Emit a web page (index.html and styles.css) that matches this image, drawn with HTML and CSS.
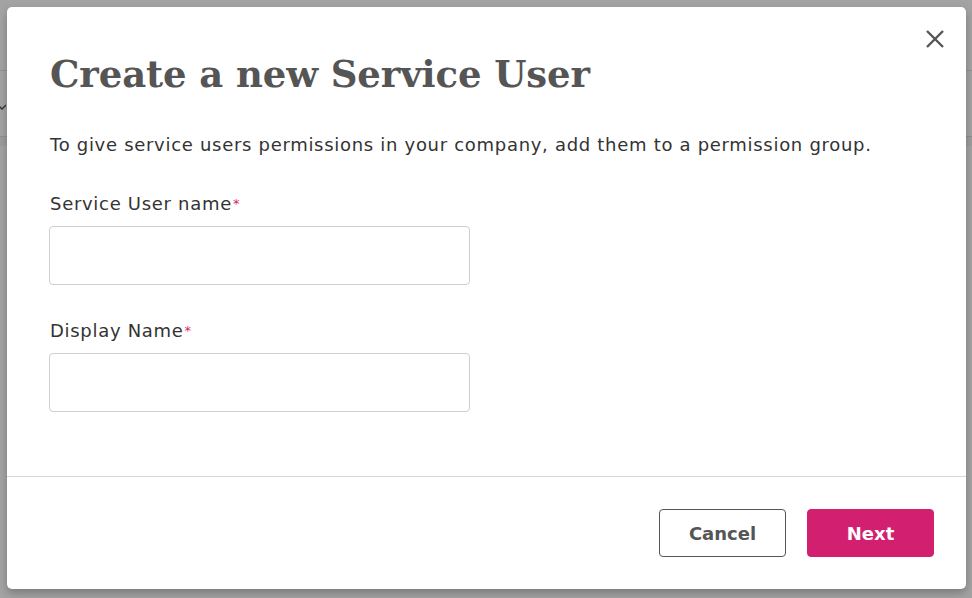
FILE: index.html
```html
<!DOCTYPE html>
<html>
<head>
<meta charset="utf-8">
<link rel="stylesheet" href="styles.css">
</head>
<body>
<div class="page">
  <div class="bg-line bg-line-1"></div>
  <svg class="bg-chev" width="8" height="6" viewBox="0 0 8 6"><path d="M0 1 L4 5 L8 1" stroke="#333" stroke-width="1.3" fill="none"/></svg>
  <div class="bg-band"></div>
</div>
<div class="overlay">
  <div class="modal">
    <button class="close" aria-label="Close">
      <svg width="20" height="20" viewBox="0 0 20 20"><path d="M2 2 L18 18 M18 2 L2 18" stroke="#555" stroke-width="2.4" stroke-linecap="butt" fill="none"/></svg>
    </button>
    <div class="body">
      <h1 class="title">Create a new Service User</h1>
      <p class="intro">To give service users permissions in your company, add them to a permission group.</p>
      <div class="field">
        <label class="label">Service User name<span class="req">*</span></label>
        <input class="input" type="text">
      </div>
      <div class="field">
        <label class="label">Display Name<span class="req">*</span></label>
        <input class="input" type="text">
      </div>
    </div>
    <div class="footer">
      <button class="btn btn-secondary">Cancel</button>
      <button class="btn btn-primary">Next</button>
    </div>
  </div>
</div>
</body>
</html>
```
FILE: styles.css
```css
html, body {
  margin: 0;
  padding: 0;
  width: 972px;
  height: 598px;
  overflow: hidden;
  background: #a3a3a3;
  font-family: "DejaVu Sans", "Liberation Sans", sans-serif;
}
.page {
  position: absolute;
  inset: 0;
  background: #a3a3a3;
}
.bg-line {
  position: absolute;
  left: 0;
  right: 0;
  height: 1px;
  background: #929292;
}
.bg-line-1 { top: 70px; }
.bg-band {
  position: absolute;
  left: 0;
  right: 0;
  top: 136px;
  height: 9px;
  background: #9c9c9c;
  border-top: 1px solid #8f8f8f;
}
.bg-chev {
  position: absolute;
  left: -2px;
  top: 104px;
}
.overlay {
  position: absolute;
  inset: 0;
}
.modal {
  position: absolute;
  left: 7px;
  top: 7px;
  width: 959px;
  height: 582px;
  background: #fff;
  border-radius: 5px;
  box-shadow: 0 4px 8px rgba(0,0,0,0.25);
  display: flex;
  flex-direction: column;
}
.close {
  position: absolute;
  top: 17px;
  right: 16px;
  width: 30px;
  height: 30px;
  padding: 0;
  border: none;
  background: transparent;
  display: flex;
  align-items: center;
  justify-content: center;
}
.body {
  flex: 1;
  padding: 0 43px;
  border-bottom: 1px solid #d6d6d6;
}
.title {
  margin: 46px 0 0;
  font-family: "DejaVu Serif", serif;
  font-weight: bold;
  font-size: 37px;
  line-height: 42px;
  color: #555;
  letter-spacing: -0.1px;
}
.intro {
  margin: 38px 0 0;
  font-size: 18px;
  line-height: 24px;
  letter-spacing: 0.7px;
  color: #333;
}
.field {
  margin-top: 35px;
  display: flex;
  flex-direction: column;
}
.field + .field { margin-top: 34px; }
.label {
  font-size: 18px;
  line-height: 24px;
  letter-spacing: 0.7px;
  color: #333;
  margin-bottom: 10px;
}
.req {
  color: #e0245e;
  font-size: 13px;
  vertical-align: top;
  margin-left: 1px;
}
.input {
  width: 421px;
  height: 59px;
  box-sizing: border-box;
  border: 1px solid #cfcfcf;
  border-radius: 4px;
  margin: 0 0 0 -1px;
}
.footer {
  padding: 32px 32px 32px;
  display: flex;
  justify-content: flex-end;
  gap: 21px;
}
.btn {
  width: 127px;
  height: 48px;
  box-sizing: border-box;
  border-radius: 4px;
  font-family: "DejaVu Sans", "Liberation Sans", sans-serif;
  font-size: 18px;
  font-weight: 700;
}
.btn-secondary {
  background: #fff;
  border: 1px solid #555;
  color: #555;
}
.btn-primary {
  background: #d31f70;
  border: 1px solid #d31f70;
  color: #fff;
}
```
